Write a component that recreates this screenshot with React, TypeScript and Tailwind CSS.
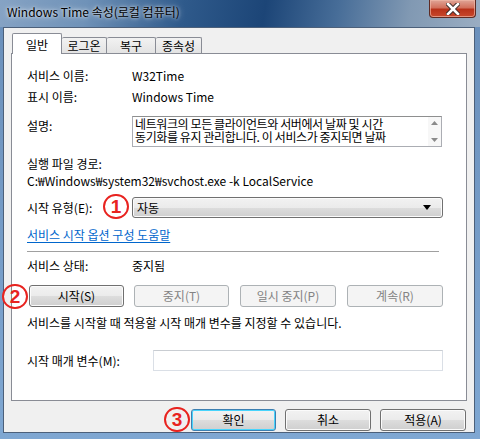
import React from 'react';

const font = "font-['Noto_Sans_CJK_KR','Noto_Sans',sans-serif]";

function Marker({ n, className }: { n: string; className: string }) {
  return (
    <div
      className={`absolute flex items-center justify-center w-[26px] h-[25px] rounded-full border-2 border-[#e8231f] text-[#e8231f] text-[19px] font-bold leading-none font-['Liberation_Sans',sans-serif] ${className}`}
    >
      {n}
    </div>
  );
}

function WinButton({
  label,
  disabled,
  primary,
  className = '',
}: {
  label: string;
  disabled?: boolean;
  primary?: boolean;
  className?: string;
}) {
  if (disabled) {
    return (
      <div
        className={`h-[22px] flex items-center justify-center rounded-[3px] border border-[#adb2b5] bg-[#f4f4f4] text-[#838383] ${className}`}
      >
        {label}
      </div>
    );
  }
  return (
    <div
      className={`h-[22px] flex items-center justify-center rounded-[3px] border ${
        primary
          ? 'border-[#3c7fb1] shadow-[inset_0_0_0_1px_#48d4fc]'
          : 'border-[#707070] shadow-[inset_0_0_0_1px_#fbfbfb]'
      } bg-[linear-gradient(#f2f2f2_0%,#ebebeb_50%,#dddddd_50%,#cfcfcf_100%)] text-black ${className}`}
    >
      {label}
    </div>
  );
}

export default function App() {
  return (
    <div className={`w-[480px] h-[439px] flex flex-col bg-[linear-gradient(#6a8fba,#7fa7d2)] text-[12px] ${font} overflow-hidden`}>
      {/* title bar */}
      <div className="relative h-[27px] shrink-0 bg-[linear-gradient(100deg,#86a3c4_0%,#6f92b8_18%,#2f5a8b_38%,#1c4577_55%,#476d98_70%,#8199b3_85%,#9aadc2_100%)]">
        <div className="absolute left-[7px] top-[4px] text-black leading-[16px] [text-shadow:0_0_6px_#ffffffcc,0_0_3px_#ffffffaa]">
          Windows Time 속성(로컬 컴퓨터)
        </div>
        <div className="absolute left-[429px] top-0 w-[47px] h-[18px] rounded-b-[4px] border border-t-0 border-[#5e2b24] bg-[linear-gradient(#e0a597_0%,#d2715d_45%,#b8321a_55%,#c8482c_100%)] flex items-center justify-center shadow-[inset_0_0_0_1px_#f0b8a8aa]">
          <svg width="14" height="12" viewBox="0 0 14 12">
            <path d="M2 1 L12 11 M12 1 L2 11" stroke="#3a2a28" strokeWidth="4.5" strokeLinecap="square" />
            <path d="M2 1 L12 11 M12 1 L2 11" stroke="#ffffff" strokeWidth="2.6" strokeLinecap="square" />
          </svg>
        </div>
      </div>

      {/* body with frame sides */}
      <div className="flex-1 flex pl-[3px] pr-[5px] pb-[6px]">
        <div className="relative flex-1 flex flex-col border border-[#4c607a] bg-[#f0f0f0] pl-[7px] pr-[7px] pt-[5px]">
          {/* tabs */}
          <div className="flex items-end h-[20px] pl-[1px] relative z-10">
            <div className="h-[21px] w-[50px] -mb-px flex items-start justify-center pt-[2px] bg-white border border-b-0 border-[#898c95] rounded-t-[2px] text-black">
              일반
            </div>
            <div className="h-[16px] w-[45px] flex items-center justify-center border border-l-0 border-b-0 border-[#898c95] bg-[linear-gradient(#f2f2f2,#e3e3e3)] rounded-t-[2px] text-black">
              로그온
            </div>
            <div className="h-[16px] w-[49px] flex items-center justify-center border border-l-0 border-b-0 border-[#898c95] bg-[linear-gradient(#f2f2f2,#e3e3e3)] rounded-t-[2px] text-black">
              복구
            </div>
            <div className="h-[16px] w-[46px] flex items-center justify-center border border-l-0 border-b-0 border-[#898c95] bg-[linear-gradient(#f2f2f2,#e3e3e3)] rounded-t-[2px] text-black">
              종속성
            </div>
          </div>

          {/* tab panel */}
          <div className="h-[348px] flex flex-col border border-[#898c95] bg-white pl-[15px] pt-[14px] text-black">
            <div className="flex h-[16px] items-center">
              <div className="w-[105px]">서비스 이름:</div>
              <div>W32Time</div>
            </div>
            <div className="flex h-[16px] items-center mt-[5px]">
              <div className="w-[105px]">표시 이름:</div>
              <div>Windows Time</div>
            </div>
            <div className="flex mt-[11px]">
              <div className="w-[105px] mt-[2px] leading-[16px]">설명:</div>
              <div className="w-[310px] h-[31px] flex border border-[#abadb3] border-t-[#8e8f8f] overflow-hidden">
                <div className="flex-1 pl-[2px] leading-[13px] whitespace-nowrap tracking-[-0.4px]">
                  <div>네트워크의 모든 클라이언트와 서버에서 날짜 및 시간</div>
                  <div>동기화를 유지 관리합니다. 이 서비스가 중지되면 날짜</div>
                </div>
                <div className="w-[13px] bg-[#f7f7f7] flex flex-col items-center justify-between py-[4px]">
                  <svg width="7" height="4" viewBox="0 0 7 4"><path d="M0 4 L3.5 0 L7 4 Z" fill="#8a8a8a" /></svg>
                  <svg width="7" height="4" viewBox="0 0 7 4"><path d="M0 0 L3.5 4 L7 0 Z" fill="#8a8a8a" /></svg>
                </div>
              </div>
            </div>
            <div className="h-[16px] leading-[16px] mt-[9px]">실행 파일 경로:</div>
            <div className="h-[16px] leading-[16px] mt-[1px]">C:₩Windows₩system32₩svchost.exe -k LocalService</div>

            <div className="flex items-center mt-[8px]">
              <div className="w-[105px]">시작 유형(E):</div>
              <div className="w-[311px] h-[21px] flex items-center justify-between rounded-[3px] border border-[#707070] bg-[linear-gradient(#f2f2f2_0%,#ebebeb_50%,#dddddd_50%,#cfcfcf_100%)] shadow-[inset_0_0_0_1px_#fbfbfb] pl-[4px] pr-[11px]">
                <span>자동</span>
                <svg width="8" height="5" viewBox="0 0 8 5"><path d="M0 0 L8 0 L4 5 Z" fill="#000" /></svg>
              </div>
            </div>

            <div className="h-[16px] leading-[16px] mt-[9px] text-[#0066cc] underline underline-offset-2">
              서비스 시작 옵션 구성 도움말
            </div>

            <div className="w-[412px] mt-[8px] border-t border-[#a0a0a0]" />

            <div className="flex h-[16px] items-center mt-[6px]">
              <div className="w-[105px]">서비스 상태:</div>
              <div>중지됨</div>
            </div>

            <div className="flex mt-[11px] pl-[2px] gap-[10px]">
              <WinButton label="시작(S)" className="w-[95px]" />
              <WinButton label="중지(T)" disabled className="w-[95px]" />
              <WinButton label="일시 중지(P)" disabled className="w-[96px] ml-[1px]" />
              <WinButton label="계속(R)" disabled className="w-[96px] ml-[1px]" />
            </div>

            <div className="h-[16px] leading-[16px] mt-[8px]">
              서비스를 시작할 때 적용할 시작 매개 변수를 지정할 수 있습니다.
            </div>

            <div className="flex items-center mt-[19px]">
              <div className="w-[126px]">시작 매개 변수(M):</div>
              <div className="w-[290px] h-[21px] border border-[#dadfe6] border-t-[#c9cdd2] bg-white" />
            </div>
          </div>

          {/* dialog buttons */}
          <div className="flex justify-end mt-[8px] pr-[1px] gap-[9px]">
            <WinButton label="확인" primary className="w-[85px] h-[21px]" />
            <WinButton label="취소" className="w-[86px] h-[21px]" />
            <WinButton label="적용(A)" className="w-[86px] h-[21px]" />
          </div>

          <Marker n="1" className="left-[99px] top-[166px]" />
          <Marker n="2" className="-left-[2px] top-[256px]" />
          <Marker n="3" className="left-[160px] top-[379px]" />
        </div>
      </div>
    </div>
  );
}
